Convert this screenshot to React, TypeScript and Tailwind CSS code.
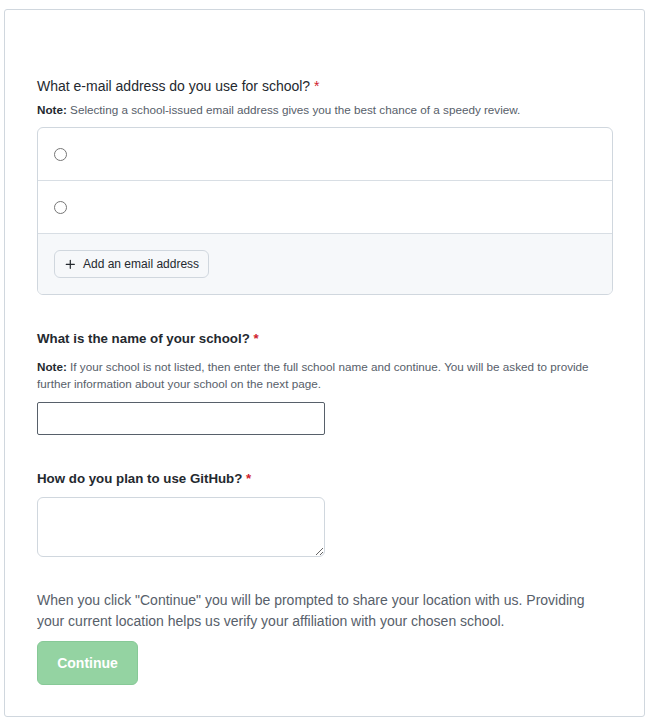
import React from "react";

export default function App() {
  return (
    <div className="min-h-[720px] bg-white pt-[9px] px-[4px] pb-[3px]" style={{ fontFamily: '"Liberation Sans", Arial, sans-serif' }}>
      <div className="border border-[#d0d7de] rounded-[3px] bg-white h-[708px] px-[32px] pt-[66px]">
        <div className="text-[14px] leading-[20px] text-[#24292f]">
          What e-mail address do you use for school? <span className="text-[#cf222e]">*</span>
        </div>
        <div className="mt-[5px] text-[11.7px] leading-[18px] text-[#57606a]">
          <b className="text-[#24292f]">Note:</b> Selecting a school-issued email address gives you the best chance of a speedy review.
        </div>
        <div className="mt-[8px] w-[576px] border border-[#d0d7de] rounded-[6px] overflow-hidden">
          <div className="h-[53px] flex items-center px-[16px] border-b border-[#d8dee4]">
            <span className="w-[13px] h-[13px] rounded-full border border-[#767676]" />
          </div>
          <div className="h-[53px] flex items-center px-[16px] border-b border-[#d8dee4]">
            <span className="w-[13px] h-[13px] rounded-full border border-[#767676]" />
          </div>
          <div className="h-[60px] bg-[#f6f8fa] flex items-center px-[16px]">
            <button className="h-[28px] px-[9px] flex items-center gap-[6px] border border-[#d0d7de] rounded-[6px] bg-[#f6f8fa] text-[12px] text-[#24292f]">
              <svg width="13" height="13" viewBox="0 0 16 16" fill="#24292f">
                <path d="M7.75 2a.75.75 0 0 1 .75.75V7h4.25a.75.75 0 0 1 0 1.5H8.5v4.25a.75.75 0 0 1-1.5 0V8.5H2.75a.75.75 0 0 1 0-1.5H7V2.75A.75.75 0 0 1 7.75 2Z" />
              </svg>
              Add an email address
            </button>
          </div>
        </div>

        <div className="mt-[34px] text-[13.3px] leading-[20px] font-bold text-[#24292f]">
          What is the name of your school? <span className="text-[#cf222e]">*</span>
        </div>
        <div className="mt-[9px] text-[11.7px] leading-[17px] text-[#57606a] w-[576px]">
          <b className="text-[#24292f]">Note:</b> If your school is not listed, then enter the full school name and continue. You will be asked to provide further information about your school on the next page.
        </div>
        <input className="mt-[10px] block w-[288px] h-[33px] border border-[#57606a] rounded-[2px] outline-none" />

        <div className="mt-[34px] text-[13.3px] leading-[20px] font-bold text-[#24292f]">
          How do you plan to use GitHub? <span className="text-[#cf222e]">*</span>
        </div>
        <textarea className="mt-[8px] block w-[288px] h-[60px] border border-[#d0d7de] rounded-[6px] outline-none" />

        <p className="mt-[33px] text-[14px] leading-[21px] text-[#57606a] w-[576px]">
          When you click "Continue" you will be prompted to share your location with us. Providing your current location helps us verify your affiliation with your chosen school.
        </p>
        <button className="mt-[9px] w-[101px] h-[44px] rounded-[6px] bg-[#94d3a2] border border-[#87c997] text-white text-[14px] font-bold">
          Continue
        </button>
      </div>
    </div>
  );
}
